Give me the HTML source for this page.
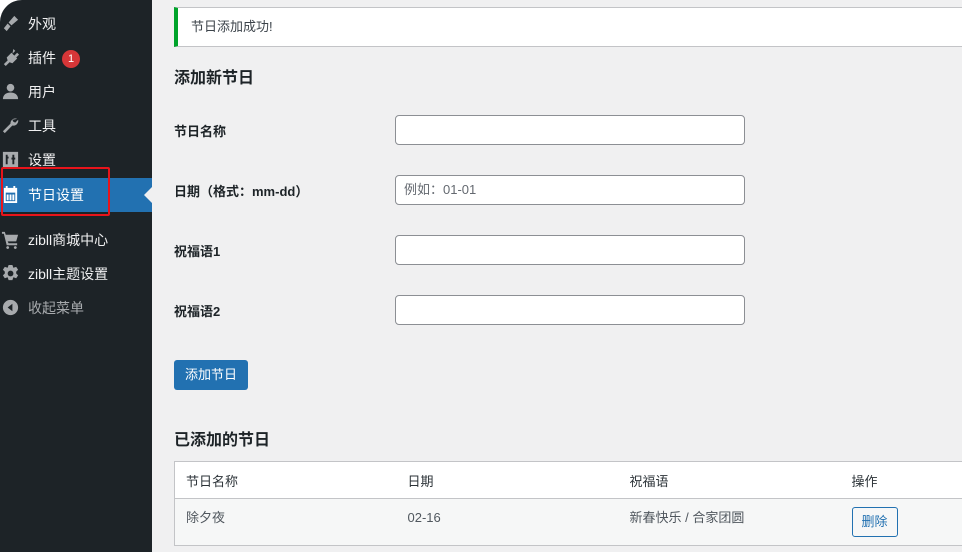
<!DOCTYPE html>
<html><head><meta charset="utf-8"><style>
*{box-sizing:border-box;margin:0;padding:0}
body{width:962px;height:552px;overflow:hidden;background:#fff;font-family:"Liberation Sans","Noto Sans CJK SC",sans-serif;font-size:13px;color:#1d2327;position:relative}
#side{position:absolute;left:0;top:0;width:152px;height:552px;background:#1d2327;border-top-left-radius:22px}
.mi{position:absolute;left:0;width:152px;height:34px;color:#f0f0f1;font-size:14px;line-height:34px;padding-left:28px}
.ic{position:absolute;left:1px;top:7px;width:19px;height:19px;fill:#a7aaad}
.act{background:#2271b1;color:#fff}
.act .ic{fill:#fff}
.badge{display:inline-block;width:18px;height:18px;border-radius:9px;background:#d63638;color:#fff;font-size:11px;line-height:18px;text-align:center;margin-left:6px;vertical-align:1px}
#main{position:absolute;left:152px;top:0;right:0;bottom:0;background:#f0f0f1}
.notice{position:absolute;left:22px;top:7px;width:800px;height:40px;background:#fff;border:1px solid #c3c4c7;border-left:4px solid #00a32a;padding-left:13px;line-height:38px;color:#3c434a;font-size:13px}
h2{position:absolute;left:22px;font-size:16px;font-weight:bold;color:#1d2327}
.lab{position:absolute;left:22px;font-weight:bold;font-size:13px;color:#1d2327}
.inp{position:absolute;left:243px;width:350px;height:30px;background:#fff;border:1px solid #8c8f94;border-radius:4px;padding-left:8px;line-height:28px;color:#646970}
.btn{position:absolute;left:22px;top:360px;width:74px;height:30px;background:#2271b1;color:#fff;border-radius:3px;text-align:center;line-height:30px;font-size:13px}
table{position:absolute;left:22px;top:461px;width:800px;border-collapse:collapse;border:1px solid #c3c4c7}
td{font-size:13px;color:#2c3338;padding-left:11px;height:37px}
tr.h td{background:#fff;border-bottom:1px solid #c3c4c7}
tr.r td{background:#f6f7f7;height:47px;color:#50575e}
tr.r td.t{vertical-align:top;padding-top:9px;line-height:20px}
tr.r td.t span{display:inline-block;line-height:20px;vertical-align:top}
.del{display:inline-block;border:1px solid #2271b1;color:#2271b1;border-radius:3px;padding:0 9px;height:30px;line-height:28px;background:#f6f7f7}
</style></head><body>
<div id="side">
<div class="mi" style="top:7px"><svg class="ic" viewBox="0 0 20 20"><path d="M14 2l4 4-7 6-3-3zM7 10l3 3-4 5-3-3z"/></svg>外观</div>
<div class="mi" style="top:41px"><svg class="ic" viewBox="0 0 20 20"><path d="M13 1l2 2-3 3 2 2 3-3 2 2-3 3 1 1-5 5-3-1-4 4-2-2 4-4-1-3 5-5 1 1z"/></svg>插件<span class="badge">1</span></div>
<div class="mi" style="top:75px"><svg class="ic" viewBox="0 0 20 20"><circle cx="10" cy="6" r="4"/><path d="M2 18c0-5 4-7 8-7s8 2 8 7z"/></svg>用户</div>
<div class="mi" style="top:109px"><svg class="ic" viewBox="0 0 20 20"><path d="M17 3a5 5 0 0 0-7 5L2 16l2 2 8-8a5 5 0 0 0 6-6l-3 3-2-1-1-2z"/></svg>工具</div>
<div class="mi" style="top:143px"><svg class="ic" viewBox="0 0 20 20"><path d="M2 2h16v16H2zM5 5v10h2V9h1V7H7V5zm7 0v3h-1v2h1v5h2V10h1V8h-1V5z"/></svg>设置</div>
<div class="mi act" style="top:178px"><svg class="ic" viewBox="0 0 20 20"><path d="M3 3h2V1h2v2h6V1h2v2h2v16H3zm2 5v9h10V8zm1 2h2v6H6zm3 0h2v6H9zm3 0h2v6h-2z"/></svg>节日设置
<div style="position:absolute;right:0;top:9px;width:0;height:0;border:8px solid transparent;border-right-color:#f0f0f1"></div></div>
<div style="position:absolute;left:1px;top:167px;width:109px;height:49px;border:2px solid #e8141b;border-radius:2px"></div>
<div class="mi" style="top:223px"><svg class="ic" viewBox="0 0 20 20"><path d="M1 2h3l1 3h13l-2 7H7l1 2h9v2H6L3 4H1zM7 17a1.5 1.5 0 1 0 .1 0zm8 0a1.5 1.5 0 1 0 .1 0z"/></svg>zibll商城中心</div>
<div class="mi" style="top:257px"><svg class="ic" viewBox="0 0 20 20"><path d="M8 1h4l1 3 3-1 2 3-2 2 0 2 2 2-2 3-3-1-1 3H8l-1-3-3 1-2-3 2-2V8L2 6l2-3 3 1zm2 6a3 3 0 1 0 .1 0z"/></svg>zibll主题设置</div>
<div class="mi" style="top:291px;color:#a7aaad"><svg class="ic" viewBox="0 0 20 20"><path d="M10 2a8 8 0 1 1 0 16 8 8 0 0 1 0-16zm2 4l-5 4 5 4z"/></svg>收起菜单</div>
</div>
<div id="main">
<div class="notice">节日添加成功!</div>
<h2 style="top:64px">添加新节日</h2>
<div class="lab" style="top:121px">节日名称</div><div class="inp" style="top:115px"></div>
<div class="lab" style="top:181px">日期（格式：mm-dd）</div><div class="inp" style="top:175px">例如：01-01</div>
<div class="lab" style="top:241px">祝福语1</div><div class="inp" style="top:235px"></div>
<div class="lab" style="top:301px">祝福语2</div><div class="inp" style="top:295px"></div>
<div class="btn">添加节日</div>
<h2 style="top:426px">已添加的节日</h2>
<table>
<tr class="h"><td style="width:222px">节日名称</td><td style="width:222px">日期</td><td style="width:222px">祝福语</td><td>操作</td></tr>
<tr class="r"><td class="t"><span>除夕夜</span></td><td class="t"><span>02-16</span></td><td class="t"><span>新春快乐 / 合家团圆</span></td><td><span class="del">删除</span></td></tr>
</table>
</div>
</body></html>
